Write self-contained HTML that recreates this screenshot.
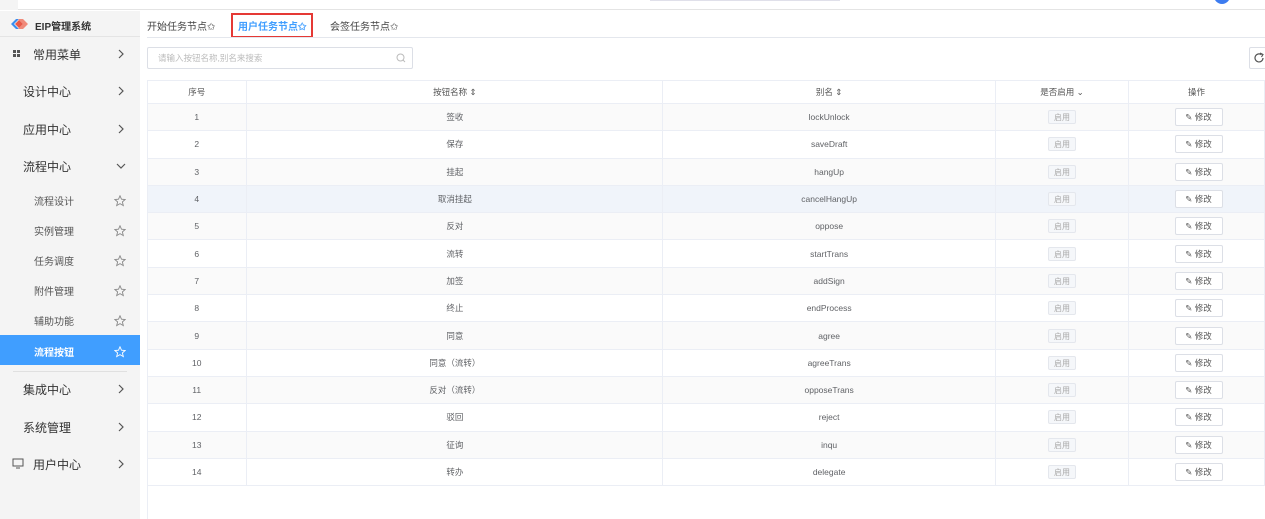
<!DOCTYPE html>
<html><head><meta charset="utf-8"><style>
*{box-sizing:border-box;margin:0;padding:0}
body{width:1265px;height:519px;overflow:hidden;background:#fff;font-family:"Liberation Sans","Noto Sans CJK SC",sans-serif;position:relative;color:#606266}
.abs{position:absolute}
.top{left:0;top:0;width:1265px;height:10px;background:#fff;border-bottom:1px solid #e4e4e4}
.side{left:0;top:11px;width:140px;height:508px;background:#f4f4f4}
.mi{position:absolute;left:0;width:140px;height:16px;font-size:12px;color:#333}
.mi .t{position:absolute;left:23px;top:0}
.mi svg{position:absolute;left:117px;top:3px}
.sub{position:absolute;left:0;width:140px;height:30px;font-size:10px;color:#555}
.sub .t{position:absolute;left:34px;top:7px}
.sub svg{position:absolute;left:114px;top:9px}
table{border-collapse:collapse;position:absolute;left:147px;top:80px;width:1118px;font-size:8.5px;color:#606266}
td,th{border:1px solid #ebeef5;border-left:none;border-right:1px solid #ebeef5;text-align:center;height:27.3px;padding:0;font-weight:normal}
th{height:23px;color:#555}
tr:nth-child(even) td{background:#fafafa}
tr.hv td{background:#f0f4fa}
.en{display:inline-block;width:28px;height:14px;line-height:13px;border:1px solid #e4e7ed;background:#f5f7fa;color:#aaa;font-size:8px;border-radius:2px}
.ed{display:inline-block;width:48px;height:18px;line-height:16px;border:1px solid #dcdfe6;background:#fff;color:#555;font-size:8.5px;border-radius:2px;margin-left:4px}
</style></head><body>
<svg width="0" height="0" style="position:absolute"><defs>
<symbol id="chv" viewBox="0 0 8 10"><path d="M2 1 L6 5 L2 9" fill="none" stroke="#555" stroke-width="1.2"/></symbol>
<symbol id="star" viewBox="0 0 12 12"><path d="M6 0.8 L7.5 4.2 L11.2 4.5 L8.4 6.9 L9.3 10.6 L6 8.6 L2.7 10.6 L3.6 6.9 L0.8 4.5 L4.5 4.2Z" fill="none" stroke="currentColor" stroke-width="0.9"/></symbol>
</defs></svg>
<div class="abs top"></div>
<div class="abs" style="left:0;top:0;width:18px;height:10px;background:#f4f4f4"></div>
<div class="abs" style="left:650px;top:0;width:190px;height:1px;background:#e0e0ea"></div>
<div class="abs" style="left:1214px;top:-12px;width:16px;height:16px;border-radius:50%;background:#3d7cf0"></div>
<div class="abs side"></div>
<div class="abs" style="left:0;top:36px;width:140px;height:1px;background:#e4e4e4"></div>
<svg class="abs" style="left:11px;top:19px" width="18" height="10"><path d="M0 5 L5 0 L8 0 L3 5 L8 10 L5 10Z" fill="#3a8ef0"/><path d="M7 0 L12 0 L17 5 L12 10 L7 10 L12 5Z" fill="#f08a7a"/><path d="M4 5 L8 1 L12 5 L8 9Z" fill="#e85a4a"/></svg>
<div class="abs" style="left:35px;top:18px;font-size:10px;font-weight:bold;color:#333">EIP管理系统</div>
<div class="mi" style="top:46px"><span style="position:absolute;left:13px;top:4px;width:3px;height:3px;background:#555;box-shadow:4px 0 #555,0 4px #555,4px 4px #555"></span><span class="t" style="left:33px">常用菜单</span><svg width="8" height="10"><use href="#chv"/></svg></div>
<div class="mi" style="top:83px"><span class="t">设计中心</span><svg width="8" height="10"><use href="#chv"/></svg></div>
<div class="mi" style="top:121px"><span class="t">应用中心</span><svg width="8" height="10"><use href="#chv"/></svg></div>
<div class="mi" style="top:158px"><span class="t">流程中心</span><svg width="10" height="8" style="left:116px;top:4px"><path d="M1 2 L5 6 L9 2" fill="none" stroke="#555" stroke-width="1.2"/></svg></div>
<div class="sub" style="top:186px"><span class="t">流程设计</span><svg width="12" height="12" style="color:#888"><use href="#star"/></svg></div>
<div class="sub" style="top:216px"><span class="t">实例管理</span><svg width="12" height="12" style="color:#888"><use href="#star"/></svg></div>
<div class="sub" style="top:246px"><span class="t">任务调度</span><svg width="12" height="12" style="color:#888"><use href="#star"/></svg></div>
<div class="sub" style="top:276px"><span class="t">附件管理</span><svg width="12" height="12" style="color:#888"><use href="#star"/></svg></div>
<div class="sub" style="top:306px"><span class="t">辅助功能</span><svg width="12" height="12" style="color:#888"><use href="#star"/></svg></div>
<div class="sub" style="top:335px;background:#409eff;color:#fff"><span class="t" style="font-weight:bold;top:9px">流程按钮</span><svg width="12" height="12" style="color:#fff;top:11px"><use href="#star"/></svg></div>
<div class="abs" style="left:13px;top:371px;width:114px;height:1px;background:#e0e0e0"></div>
<div class="mi" style="top:381px"><span class="t">集成中心</span><svg width="8" height="10"><use href="#chv"/></svg></div>
<div class="mi" style="top:419px"><span class="t">系统管理</span><svg width="8" height="10"><use href="#chv"/></svg></div>
<div class="mi" style="top:456px"><svg width="12" height="11" style="left:12px;top:2px"><rect x="1" y="1" width="10" height="7" fill="none" stroke="#555" stroke-width="1"/><path d="M4 10 H8" stroke="#555"/></svg><span class="t" style="left:33px">用户中心</span><svg width="8" height="10"><use href="#chv"/></svg></div>

<div class="abs" style="left:147px;top:18px;font-size:10px;color:#444">开始任务节点✩</div>
<div class="abs" style="left:231px;top:13px;width:82px;height:25px;border:2px solid #e53935"></div>
<div class="abs" style="left:238px;top:18px;font-size:10px;color:#409eff;font-weight:bold">用户任务节点✩</div>
<div class="abs" style="left:330px;top:18px;font-size:10px;color:#444">会签任务节点✩</div>
<div class="abs" style="left:147px;top:37px;width:1118px;height:1px;background:#e4e7ed"></div>
<div class="abs" style="left:147px;top:47px;width:266px;height:22px;border:1px solid #dcdfe6;border-radius:2px"></div>
<div class="abs" style="left:158px;top:52px;font-size:8.5px;color:#bbb">请输入按钮名称,别名来搜索</div>
<svg class="abs" style="left:396px;top:53px" width="10" height="10"><circle cx="4.5" cy="4.5" r="3.5" fill="none" stroke="#bbb"/><path d="M7 7 L9 9" stroke="#bbb"/></svg>
<div class="abs" style="left:1249px;top:47px;width:20px;height:22px;border:1px solid #dcdfe6;border-radius:2px"></div>
<svg class="abs" style="left:1253px;top:52px" width="12" height="12"><path d="M10 6 A4 4 0 1 1 8.5 2.8" fill="none" stroke="#555" stroke-width="1.2"/><path d="M7 1 L10 2.5 L8.5 5" fill="none" stroke="#555" stroke-width="1.1"/></svg>

<table>
<colgroup><col style="width:100px"><col style="width:416px"><col style="width:333px"><col style="width:133px"><col style="width:136px"></colgroup>
<tr><th>序号</th><th>按钮名称 ⇕</th><th>别名 ⇕</th><th>是否启用 ⌄</th><th>操作</th></tr>
<tr><td>1</td><td>签收</td><td>lockUnlock</td><td><span class="en">启用</span></td><td><span class="ed">✎ 修改</span></td></tr>
<tr><td>2</td><td>保存</td><td>saveDraft</td><td><span class="en">启用</span></td><td><span class="ed">✎ 修改</span></td></tr>
<tr><td>3</td><td>挂起</td><td>hangUp</td><td><span class="en">启用</span></td><td><span class="ed">✎ 修改</span></td></tr>
<tr class="hv"><td>4</td><td>取消挂起</td><td>cancelHangUp</td><td><span class="en">启用</span></td><td><span class="ed">✎ 修改</span></td></tr>
<tr><td>5</td><td>反对</td><td>oppose</td><td><span class="en">启用</span></td><td><span class="ed">✎ 修改</span></td></tr>
<tr><td>6</td><td>流转</td><td>startTrans</td><td><span class="en">启用</span></td><td><span class="ed">✎ 修改</span></td></tr>
<tr><td>7</td><td>加签</td><td>addSign</td><td><span class="en">启用</span></td><td><span class="ed">✎ 修改</span></td></tr>
<tr><td>8</td><td>终止</td><td>endProcess</td><td><span class="en">启用</span></td><td><span class="ed">✎ 修改</span></td></tr>
<tr><td>9</td><td>同意</td><td>agree</td><td><span class="en">启用</span></td><td><span class="ed">✎ 修改</span></td></tr>
<tr><td>10</td><td>同意（流转）</td><td>agreeTrans</td><td><span class="en">启用</span></td><td><span class="ed">✎ 修改</span></td></tr>
<tr><td>11</td><td>反对（流转）</td><td>opposeTrans</td><td><span class="en">启用</span></td><td><span class="ed">✎ 修改</span></td></tr>
<tr><td>12</td><td>驳回</td><td>reject</td><td><span class="en">启用</span></td><td><span class="ed">✎ 修改</span></td></tr>
<tr><td>13</td><td>征询</td><td>inqu</td><td><span class="en">启用</span></td><td><span class="ed">✎ 修改</span></td></tr>
<tr><td>14</td><td>转办</td><td>delegate</td><td><span class="en">启用</span></td><td><span class="ed">✎ 修改</span></td></tr>
</table>
<div class="abs" style="left:147px;top:80px;width:1px;height:439px;background:#ebeef5"></div>
</body></html>
